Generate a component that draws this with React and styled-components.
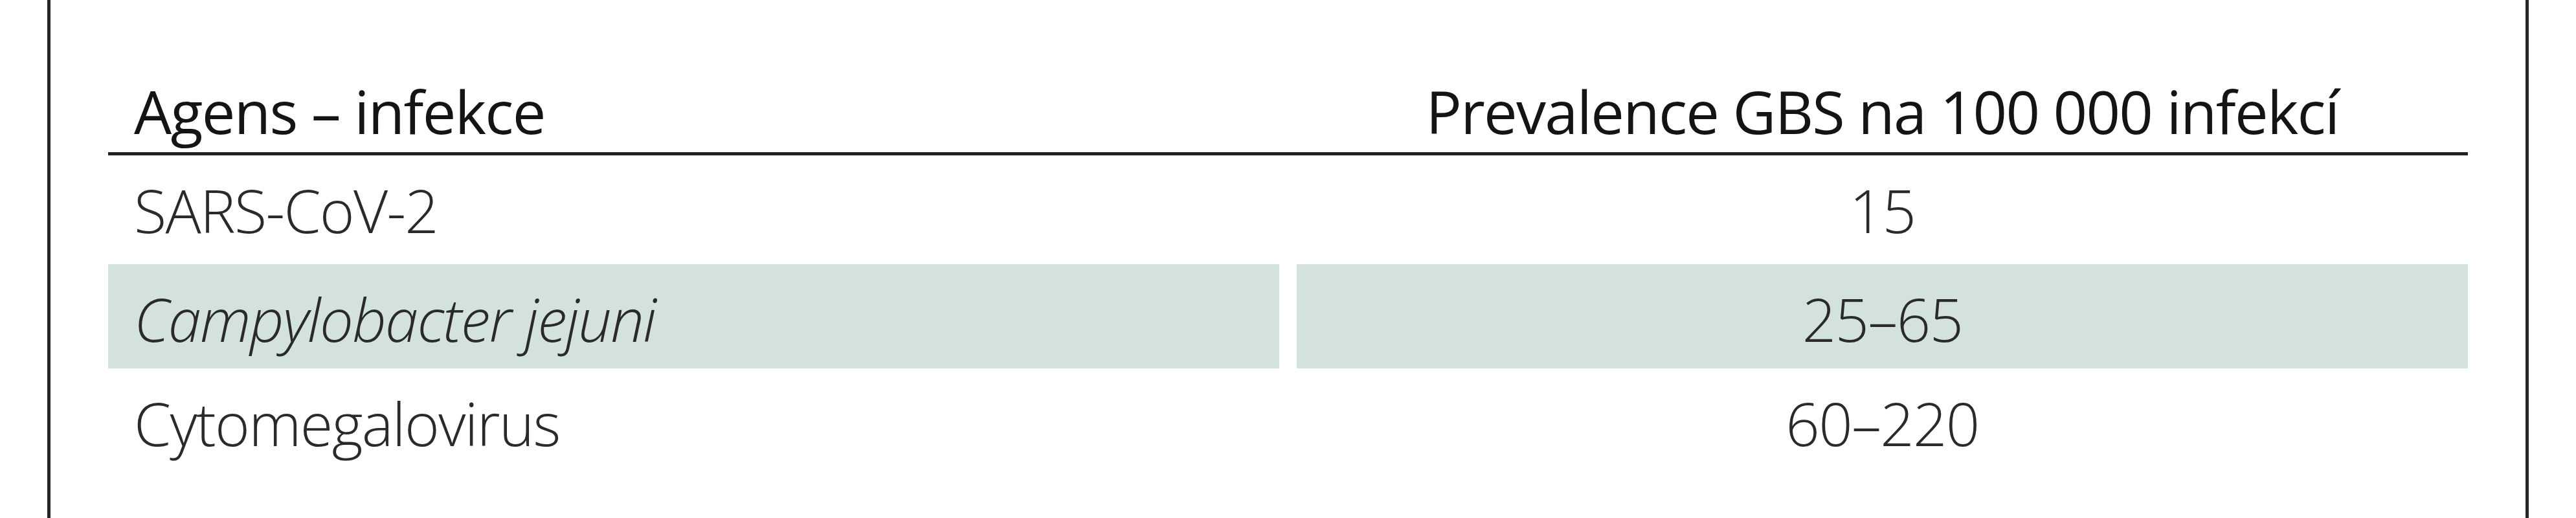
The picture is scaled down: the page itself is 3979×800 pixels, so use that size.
import React from 'react'
import styled, {createGlobalStyle} from 'styled-components'

const GlobalStyle = createGlobalStyle`
    html, body {
        margin: 0;
        padding: 0;
        background: #ffffff;
    }
    body {
        font-family: "Open Sans", "Liberation Sans", sans-serif;
    }
`

const Frame = styled.div`
    box-sizing: border-box;
    height: 800px;
    margin: 0 73px;
    padding: 0 89px;
    border-left: 5px solid #262626;
    border-right: 5px solid #262626;
    overflow: hidden;
`

const Table = styled.div`
    display: flex;
    flex-direction: column;
`

const Row = styled.div`
    display: grid;
    grid-template-columns: 1fr 1fr;
    column-gap: 27px;
    height: ${p => p.head ? '235px' : '161px'};
    margin-bottom: ${p => p.first ? '7px' : '0'};
`

const Cell = styled.div`
    display: flex;
    align-items: ${p => p.head ? 'flex-end' : 'center'};
    justify-content: ${p => p.center ? 'center' : 'flex-start'};
    box-sizing: border-box;
    padding: ${p => p.head ? '0 0 17px' : '8px 0 0'};
    padding-left: ${p => p.center ? '0' : '40px'};
    background: ${p => p.shaded ? '#d3e2de' : 'transparent'};
    font-size: 92px;
    line-height: 1;
    letter-spacing: -1.7px;
    font-weight: ${p => p.head ? 400 : 300};
    font-style: ${p => p.italic ? 'italic' : 'normal'};
    color: ${p => p.head ? '#141414' : '#2a2a2a'};
    white-space: nowrap;
`

const Rule = styled.div`
    height: 5px;
    background: #222222;
`

const rows = [
    {agens: 'SARS-CoV-2', value: '15'},
    {agens: 'Campylobacter jejuni', value: '25–65', italic: true, shaded: true},
    {agens: 'Cytomegalovirus', value: '60–220'},
]

export default function App() {
    return (
        <>
            <GlobalStyle />
            <Frame>
                <Table>
                    <Row head>
                        <Cell head>Agens – infekce</Cell>
                        <Cell head center>Prevalence GBS na 100 000 infekcí</Cell>
                    </Row>
                    <Rule />
                    {rows.map((r, i) => (
                        <Row key={r.agens} first={i === 0}>
                            <Cell shaded={r.shaded} italic={r.italic}>{r.agens}</Cell>
                            <Cell shaded={r.shaded} center>{r.value}</Cell>
                        </Row>
                    ))}
                </Table>
            </Frame>
        </>
    )
}
